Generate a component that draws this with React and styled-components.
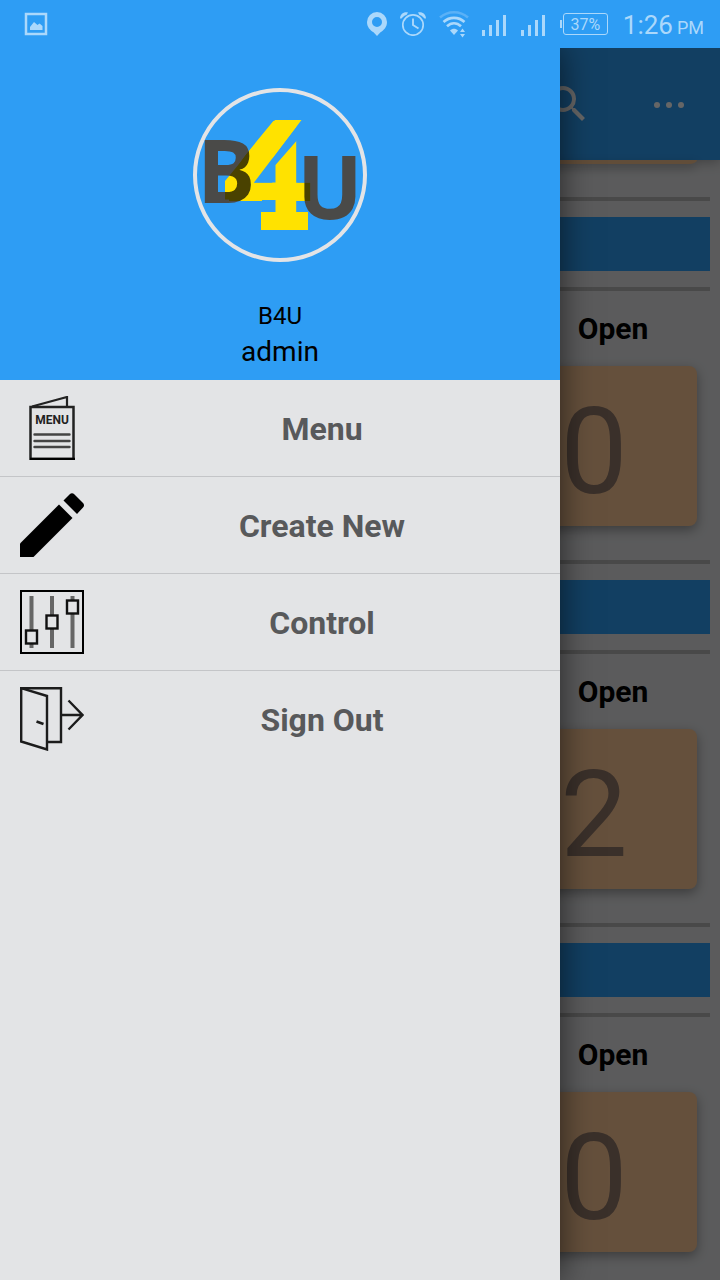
import React from "react";
import styled, { createGlobalStyle } from "styled-components";
import { MdSearch } from "react-icons/md";

const GlobalStyle = createGlobalStyle`
  * { box-sizing: border-box; }
  body { margin: 0; font-family: Roboto, "Liberation Sans", sans-serif; background: #e3e4e6; }
  button { font: inherit; border: 0; margin: 0; padding: 0; background: none; cursor: pointer; }
  svg { display: block; flex: none; }
`;

const Screen = styled.div`
  display: flex;
  flex-direction: column;
  min-height: 100vh;
  overflow: hidden;
`;

const StatusBar = styled.header`
  display: flex;
  align-items: center;
  height: 48px;
  padding: 0 16px 0 24px;
  background: #2e9df4;
  color: #abd8fb;
`;

const StatusGroup = styled.div`
  display: flex;
  align-items: center;
  gap: 13px;
  margin-left: auto;
`;

const Signals = styled.div`
  display: flex;
  gap: 14px;
  padding-top: 2px;
`;

const Battery = styled.div`
  display: flex;
  align-items: center;
  margin: 0 2px 0 1px;
  &::before {
    content: "";
    width: 2px;
    height: 8px;
    margin-right: 1px;
    background: currentColor;
  }
`;

const BatteryLevel = styled.span`
  width: 45px;
  height: 22px;
  border: 1px solid currentColor;
  border-radius: 3px;
  font-size: 16px;
  line-height: 21px;
  text-align: center;
`;

const Clock = styled.time`
  font-size: 26px;
  line-height: 32px;
  padding-top: 4px;
  small { font-size: 18px; margin-left: 4px; }
`;

const Body = styled.div`
  position: relative;
  display: flex;
  flex-direction: column;
  flex: 1;
  overflow: hidden;
`;

const AppBar = styled.div`
  display: flex;
  align-items: center;
  justify-content: flex-end;
  gap: 52px;
  height: 112px;
  padding-right: 28px;
  background: #2e9df4;
  color: #ffffff;
  box-shadow: 0 2px 12px rgba(0, 0, 0, 0.3);
`;

const IconButton = styled.button`
  width: 48px;
  height: 48px;
  color: inherit;
`;

const Board = styled.main`
  flex: 1;
  padding: 0 10px;
`;

const CardTail = styled.div`
  width: 206px;
  height: 4px;
  margin: 0 13px 33px auto;
  background: #f2c090;
  border-radius: 0 0 8px 8px / 0 0 4px 4px;
  box-shadow: 0 4px 10px rgba(0, 0, 0, 0.3);
`;

const Section = styled.section`
  display: flex;
  flex-direction: column;
  margin-bottom: 34px;
  &:last-child { margin-bottom: 28px; }
`;

const Band = styled.div`
  padding: 16px 0;
  border: solid #b7b7b7;
  border-width: 4px 0;
  &::before {
    content: "";
    display: block;
    height: 54px;
    background: #2e9df4;
  }
`;

const CardTitle = styled.h2`
  align-self: flex-end;
  width: 194px;
  margin: 0;
  font-size: 30px;
  line-height: 75px;
  font-weight: 700;
  text-align: center;
  color: #000;
`;

const CountCard = styled.div`
  align-self: flex-end;
  width: 206px;
  height: 160px;
  margin-right: 13px;
  padding-top: 12px;
  border-radius: 8px;
  background: #fcc896;
  box-shadow: 0 4px 12px rgba(0, 0, 0, 0.35);
  font-size: 120px;
  line-height: 148px;
  text-align: center;
  color: #91786a;
`;

const Scrim = styled.div`
  position: absolute;
  inset: 0;
  background: rgba(0, 0, 0, 0.6);
`;

const Drawer = styled.aside`
  position: absolute;
  inset: 0 160px 0 0;
  background: #e3e4e6;
  box-shadow: 0 0 32px rgba(0, 0, 0, 0.6);
`;

const Profile = styled.div`
  display: flex;
  flex-direction: column;
  align-items: center;
  height: 332px;
  padding-top: 40px;
  background: #2e9df4;
  color: #000;
`;

const Avatar = styled.div`
  width: 174px;
  height: 174px;
  margin-bottom: 36px;
  border: 4px solid #e3e4e6;
  border-radius: 50%;
`;

const LogoArt = styled.svg`
  overflow: visible;
  isolation: isolate;
`;

const LogoInk = styled.g`
  mix-blend-mode: multiply;
`;

const ProfileName = styled.div`
  font-size: 24px;
  line-height: 36px;
`;

const ProfileRole = styled.div`
  font-size: 28px;
  line-height: 36px;
`;

const MenuList = styled.ul`
  margin: 0;
  padding: 0;
  list-style: none;
  li + li { border-top: 1px solid #c4c5c8; }
`;

const MenuItem = styled.button`
  display: flex;
  align-items: center;
  width: 100%;
  height: 96px;
  padding-left: 20px;
`;

const MenuLabel = styled.span`
  flex: 1;
  padding-top: 2px;
  font-size: 32px;
  line-height: 40px;
  font-weight: 700;
  color: #58595b;
  text-align: center;
`;

/* The digit is cut by a diagonal gap, then gets a brush stroke and a slab foot. */
const Logo = () => (
  <LogoArt width="166" height="166" viewBox="197 92 166 166" role="img" aria-label="B4U">
    <mask id="cut" maskUnits="userSpaceOnUse" x="197" y="92" width="166" height="166">
      <rect x="197" y="92" width="166" height="166" fill="#fff" />
      <path d="M302 119L254 182.500H275.500V165L297.300 140L310 123V110H302zM275 119L225 180V110H275z" fill="#000" />
      <rect x="297.300" y="110" width="20" height="72.500" fill="#000" />
      <rect x="262" y="200" width="13.500" height="12" fill="#000" />
    </mask>
    <g fill="#ffe200">
      <g mask="url(#cut)">
        <text x="223" y="219" fontFamily="DejaVu Sans" fontWeight="700" fontSize="134">4</text>
      </g>
      <path d="M275 120H301.500L254 182.500V199.500H225V181z" />
      <rect x="261" y="212" width="47" height="18" />
    </g>
    <LogoInk fontFamily="Open Sans" fontWeight="700" fontSize="87" fill="#4a4a48">
      <text x="197" y="203">B</text>
      <text x="297" y="219">U</text>
    </LogoInk>
  </LogoArt>
);

const PhotoIcon = () => (
  <svg width="24" height="24" viewBox="0 0 24 24" fill="none">
    <rect x="2" y="2" width="20" height="20" stroke="currentColor" strokeWidth="2.5" />
    <path d="M6 18v-3l4-5 3.500 3 2-1.500L18.500 14v4z" fill="currentColor" />
  </svg>
);

const PinIcon = () => (
  <svg width="20" height="24" viewBox="0 0 20 24" fill="currentColor">
    <path fillRule="evenodd" d="M10 0a10 10 0 0 0-10 10c0 5 3 8 6.500 10.300L10 24l3.500-3.700C17 18 20 15 20 10A10 10 0 0 0 10 0zm0 5a5 5 0 1 1 0 10 5 5 0 0 1 0-10z" />
  </svg>
);

const AlarmIcon = () => (
  <svg width="26" height="24" viewBox="0 0 26 24" fill="none" stroke="currentColor">
    <circle cx="13" cy="13" r="10.200" strokeWidth="1.700" />
    <path d="M13 6.500v6.500l5.500 3.500" strokeWidth="1.900" />
    <path d="M0 6.500C0 2.500 3.500-.5 8 .5L6.500 3C4 3.500 2.800 5 1.500 6.500zM26 6.500C26 2.500 22.500-.5 18 .5L19.500 3C22 3.500 23.200 5 24.500 6.500z" fill="currentColor" stroke="none" />
  </svg>
);

const WifiIcon = () => (
  <svg width="30" height="28" viewBox="0 0 30 28" fill="none" stroke="currentColor" strokeWidth="2.600">
    <path d="M1 7.500C9 .5 21 .5 29 7.500" opacity="0.35" />
    <path d="M4.500 12C10.500 6.500 19.500 6.500 25.500 12" />
    <path d="M8 16.300c4.200-4 9.800-4 14 0" />
    <path d="M11 20.500c2.500-2.300 5.500-2.300 8 0l-4 4.500z" fill="currentColor" stroke="none" />
    <path d="M23.500 18.500l2.500 3.500h-5zM23.500 27.500l2.500-3.500h-5z" fill="currentColor" stroke="none" />
  </svg>
);

const SignalIcon = () => (
  <svg width="25" height="22" viewBox="0 0 25 22" fill="currentColor">
    <rect x="0" y="16" width="3" height="6" />
    <rect x="7" y="11" width="3" height="11" />
    <rect x="14" y="6" width="3" height="16" />
    <rect x="21" y="1" width="3" height="21" />
  </svg>
);

const MoreIcon = () => (
  <svg width="48" height="48" viewBox="0 0 48 48" fill="currentColor">
    <circle cx="13" cy="25" r="3" />
    <circle cx="25" cy="25" r="3" />
    <circle cx="37" cy="25" r="3" />
  </svg>
);

const MenuCardIcon = () => (
  <svg width="64" height="64" viewBox="0 0 64 64" fill="none" stroke="#222">
    <rect x="10.500" y="11" width="43" height="52" strokeWidth="2.500" />
    <path d="M10 63h45" stroke="#000" strokeWidth="2.500" />
    <path d="M12 10.500L47 1v10" strokeWidth="2.200" />
    <path d="M14.500 38.500h35M14.500 45h35M14.500 51h35" stroke="#444" strokeWidth="2.400" strokeLinecap="round" />
    <text x="32" y="27.500" textAnchor="middle" fontFamily="Roboto" fontWeight="700" fontSize="12" fill="#222" stroke="none">MENU</text>
  </svg>
);

const PencilIcon = () => (
  <svg width="64" height="64" viewBox="0 0 64 64" fill="#000">
    <path d="M0 50.500L39 11.500 52.500 25 13.500 64H0z" />
    <path d="M43.500 7.500L49.500 1.500Q52 -1 54.500 1.500L63 10Q65 12 63 14.500L57 21z" />
  </svg>
);

const SlidersIcon = () => (
  <svg width="64" height="64" viewBox="0 0 64 64" fill="none">
    <rect x="1" y="1" width="62" height="62" stroke="#000" strokeWidth="2" />
    <path d="M11.500 6v52M32 6v52M52.500 6v52" stroke="#666" strokeWidth="4" />
    <g fill="#e3e4e6" stroke="#111" strokeWidth="2.400">
      <rect x="6" y="40.500" width="11" height="13" />
      <rect x="26.500" y="25.500" width="11" height="13" />
      <rect x="47" y="10.500" width="11" height="13" />
    </g>
  </svg>
);

const DoorIcon = () => (
  <svg width="64" height="64" viewBox="0 0 64 64" fill="none" stroke="#1c1c1c" strokeWidth="2.400">
    <path d="M1.200 1.200L27 9v53.500L1.200 54.500z" />
    <path d="M1 1.200h40V55H27" />
    <path d="M16.500 34.500l7 2.500" strokeWidth="2.600" />
    <path d="M41 28h21.500M48.500 13.500L62.500 28 48.500 42.500" />
  </svg>
);

const MENU = [
  { label: "Menu", Icon: MenuCardIcon },
  { label: "Create New", Icon: PencilIcon },
  { label: "Control", Icon: SlidersIcon },
  { label: "Sign Out", Icon: DoorIcon },
];

const COUNTS = [0, 2, 0];

export default function App() {
  return (
    <Screen>
      <GlobalStyle />
      <StatusBar>
        <PhotoIcon />
        <StatusGroup>
          <PinIcon />
          <AlarmIcon />
          <WifiIcon />
          <Signals>
            <SignalIcon />
            <SignalIcon />
          </Signals>
          <Battery><BatteryLevel>37%</BatteryLevel></Battery>
          <Clock>1:26<small>PM</small></Clock>
        </StatusGroup>
      </StatusBar>
      <Body>
        <AppBar>
          <IconButton aria-label="Search"><MdSearch size={48} /></IconButton>
          <IconButton aria-label="More options"><MoreIcon /></IconButton>
        </AppBar>
        <Board>
          <CardTail />
          {COUNTS.map((count, i) => (
            <Section key={i}>
              <Band />
              <CardTitle>Open</CardTitle>
              <CountCard>{count}</CountCard>
            </Section>
          ))}
        </Board>
        <Scrim />
        <Drawer>
          <Profile>
            <Avatar><Logo /></Avatar>
            <ProfileName>B4U</ProfileName>
            <ProfileRole>admin</ProfileRole>
          </Profile>
          <nav>
            <MenuList>
              {MENU.map(({ label, Icon }) => (
                <li key={label}>
                  <MenuItem>
                    <Icon />
                    <MenuLabel>{label}</MenuLabel>
                  </MenuItem>
                </li>
              ))}
            </MenuList>
          </nav>
        </Drawer>
      </Body>
    </Screen>
  );
}
